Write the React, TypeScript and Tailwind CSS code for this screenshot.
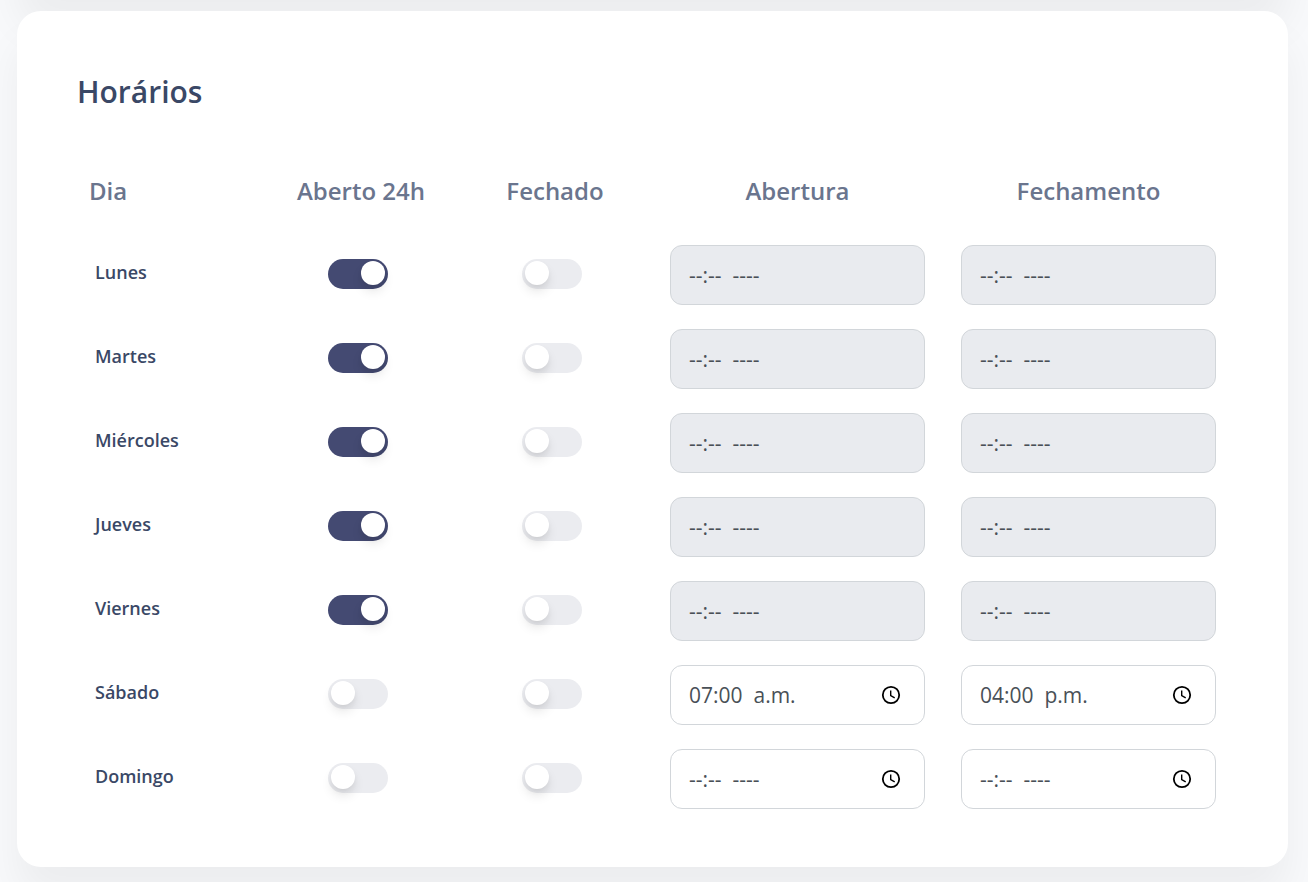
import { useState } from "react";

type Day = {
  name: string;
  open24: boolean;
  closed: boolean;
  opening: string;
  closing: string;
};

const initialDays: Day[] = [
  { name: "Lunes", open24: true, closed: false, opening: "", closing: "" },
  { name: "Martes", open24: true, closed: false, opening: "", closing: "" },
  { name: "Miércoles", open24: true, closed: false, opening: "", closing: "" },
  { name: "Jueves", open24: true, closed: false, opening: "", closing: "" },
  { name: "Viernes", open24: true, closed: false, opening: "", closing: "" },
  { name: "Sábado", open24: false, closed: false, opening: "07:00  a.m.", closing: "04:00  p.m." },
  { name: "Domingo", open24: false, closed: false, opening: "", closing: "" },
];

const ClockIcon = () => (
  <svg viewBox="0 0 20 20" className="size-5" fill="none" stroke="currentColor" aria-hidden="true">
    <circle cx="10" cy="10" r="8.2" strokeWidth="1.8" />
    <path d="M9.7 5.4v5.1l4 2.4" strokeWidth="1.4" />
  </svg>
);

type ToggleProps = {
  label: string;
  checked: boolean;
  onChange: (checked: boolean) => void;
};

const Toggle = ({ label, checked, onChange }: ToggleProps) => (
  <input
    type="checkbox"
    role="switch"
    aria-label={label}
    checked={checked}
    onChange={(e) => onChange(e.target.checked)}
    className="mx-auto block h-[30px] w-[60px] cursor-pointer appearance-none rounded-full bg-[#ebecf0] pt-[2px] pl-[3px] transition-colors after:block after:size-6 after:rounded-full after:bg-white after:shadow-[0_7px_12px_-1px_rgba(20,20,20,0.11),0_3px_6px_-1px_rgba(20,20,20,0.06)] after:transition-transform after:content-[''] checked:bg-[#444a72] checked:after:translate-x-[30px]"
  />
);

type TimeFieldProps = {
  label: string;
  value: string;
  disabled: boolean;
  onChange: (value: string) => void;
};

const TimeField = ({ label, value, disabled, onChange }: TimeFieldProps) => (
  <div
    className={`flex h-[60px] items-center rounded-xl border border-[#d2d6da] pr-[23px] pl-[18px] ${
      disabled ? "bg-[#e9ebef]" : "bg-white"
    }`}
  >
    <input
      type="text"
      aria-label={label}
      value={value}
      placeholder="--:--  ----"
      disabled={disabled}
      onChange={(e) => onChange(e.target.value)}
      className="w-full min-w-0 flex-1 bg-transparent text-[21px] leading-8 text-[#495057] outline-none placeholder:text-[#495057] placeholder:opacity-100"
    />
    {!disabled && (
      <button type="button" aria-label={`Elegir ${label}`} className="shrink-0 cursor-pointer text-black">
        <ClockIcon />
      </button>
    )}
  </div>
);

const App = () => {
  const [days, setDays] = useState(initialDays);

  const update = (index: number, changes: Partial<Day>) =>
    setDays(days.map((day, i) => (i === index ? { ...day, ...changes } : day)));

  return (
    <main className="min-h-screen overflow-hidden bg-[#f8f9fb] pr-5 pb-[15px] pl-[17px] font-['Open_Sans',sans-serif]">
      {/* Bottom edge of the card above */}
      <div className="-mt-48 h-48 rounded-3xl bg-white shadow-[0_30px_40px_rgba(0,0,0,0.05)]" />

      <section className="relative mt-[11px] rounded-3xl bg-white pt-[60px] pr-[54px] pb-[46px] pl-[60px] shadow-[0_30px_40px_rgba(0,0,0,0.05)]">
        <h2 className="text-[30px] leading-[42px] font-semibold text-[#3a4866]">Horários</h2>

        <table className="mt-[48px] w-full table-fixed border-collapse">
          <thead>
            <tr className="text-2xl leading-[36px] text-[#6a758e]">
              <th className="w-[187px] px-3 pt-3 pb-6 text-left font-semibold">Dia</th>
              <th className="w-[194px] px-3 pt-3 pb-6 text-center font-semibold">Aberto 24h</th>
              <th className="w-[194px] px-3 pt-3 pb-6 text-center font-semibold">Fechado</th>
              <th className="w-[291px] px-3 pt-3 pb-6 text-center font-semibold">Abertura</th>
              <th className="w-[291px] px-3 pt-3 pb-6 text-center font-semibold">Fechamento</th>
            </tr>
          </thead>
          <tbody>
            {days.map((day, i) => {
              const disabled = day.open24 || day.closed;
              return (
                <tr key={day.name}>
                  <th
                    scope="row"
                    className="px-[18px] pb-1.5 text-left text-lg leading-7 font-semibold text-[#3a4866]"
                  >
                    {day.name}
                  </th>
                  <td className="pr-[18px] pb-0.5 pl-3">
                    <Toggle
                      label={`${day.name} aberto 24h`}
                      checked={day.open24}
                      onChange={(open24) => update(i, { open24 })}
                    />
                  </td>
                  <td className="pr-[18px] pb-0.5 pl-3">
                    <Toggle
                      label={`${day.name} fechado`}
                      checked={day.closed}
                      onChange={(closed) => update(i, { closed })}
                    />
                  </td>
                  <td className="px-[18px] py-3">
                    <TimeField
                      label={`${day.name} abertura`}
                      value={day.opening}
                      disabled={disabled}
                      onChange={(opening) => update(i, { opening })}
                    />
                  </td>
                  <td className="px-[18px] py-3">
                    <TimeField
                      label={`${day.name} fechamento`}
                      value={day.closing}
                      disabled={disabled}
                      onChange={(closing) => update(i, { closing })}
                    />
                  </td>
                </tr>
              );
            })}
          </tbody>
        </table>
      </section>
    </main>
  );
};

export default App;
